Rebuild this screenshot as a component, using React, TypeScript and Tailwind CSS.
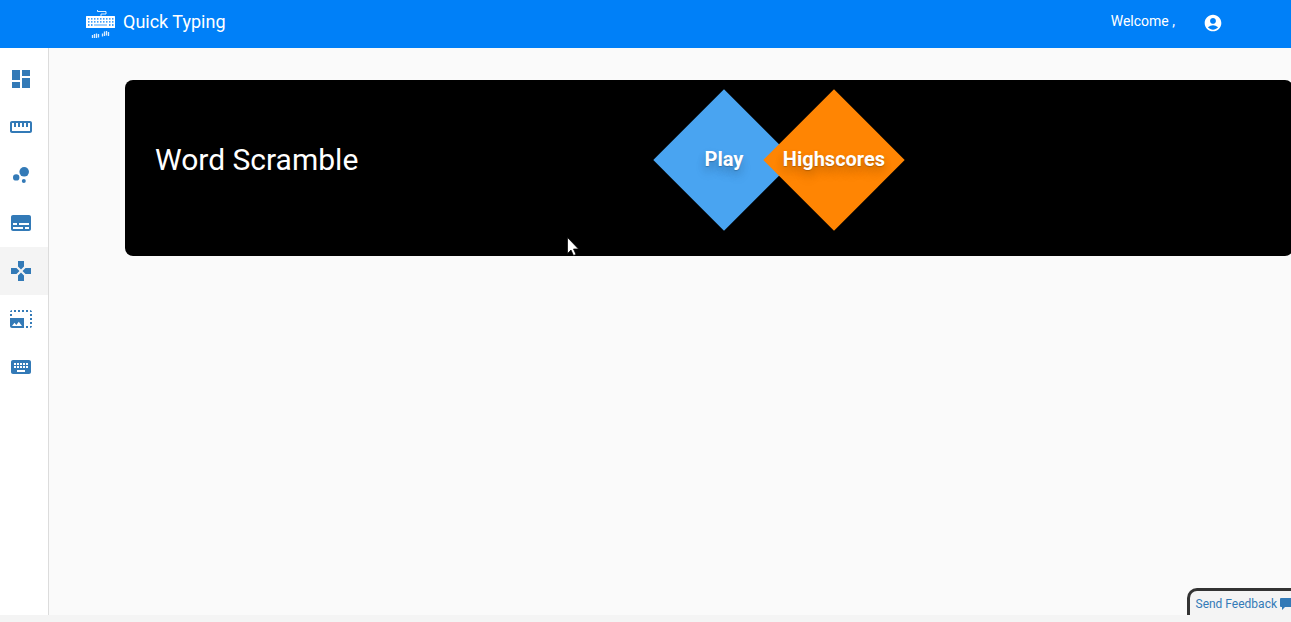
import {
  MdAccountCircle,
  MdBubbleChart,
  MdDashboard,
  MdGames,
  MdKeyboard,
  MdPhotoSizeSelectLarge,
  MdStraighten,
  MdSubtitles,
} from "react-icons/md";

const links = [
  { label: "Dashboard", href: "#dashboard", Icon: MdDashboard },
  { label: "Lessons", href: "#lessons", Icon: MdStraighten },
  { label: "Progress", href: "#progress", Icon: MdBubbleChart },
  { label: "Texts", href: "#texts", Icon: MdSubtitles },
  { label: "Games", href: "#games", Icon: MdGames, active: true },
  { label: "Pictures", href: "#pictures", Icon: MdPhotoSizeSelectLarge },
  { label: "Keyboard", href: "#keyboard", Icon: MdKeyboard },
];

const keyColumns = [3, 6, 9, 12, 15, 18, 21, 24, 27];
const keyRows = [9, 12];

function Logo() {
  return (
    <svg viewBox="0 0 30 30" className="size-[30px]" fill="none" aria-hidden="true">
      <path d="M12.500 1v1.500h8.500v2.500h-5v3" stroke="white" strokeWidth="1" opacity=".85" />
      <rect x="1" y="7" width="29" height="12" rx=".5" fill="white" />
      <g fill="#0080f8" opacity=".75">
        {keyRows.map((y) =>
          keyColumns.map((x) => <rect key={`${x}-${y}`} x={x} y={y} width="1.500" height="1.700" />),
        )}
        <path d="M3 15h1.500v2H3zM6 15h1.500v2H6zM9 15.500h13v1H9zM24 15h1.500v2H24zM27 15h1.500v2H27z" />
      </g>
      <path
        d="M7.500 26v3M9.500 25v4M11.500 24.500v4.500M13.500 25v3.500M17.500 24.500v3M19.500 22.500v4.500M21.500 22v4.500M23.500 23v4"
        stroke="white"
        strokeWidth="1.300"
        opacity=".85"
      />
    </svg>
  );
}

function FeedbackBubble() {
  return (
    <svg viewBox="0 0 14 12" className="h-3 w-3.5" fill="currentColor" aria-hidden="true">
      <path d="M1 0h12a1 1 0 0 1 1 1v7a1 1 0 0 1-1 1H5l-3 3V9H1a1 1 0 0 1-1-1V1a1 1 0 0 1 1-1z" />
    </svg>
  );
}

function Diamond({ label, color }: { label: string; color: string }) {
  return (
    <button
      type="button"
      className="grid size-[100px] cursor-pointer grid-cols-[100px] grid-rows-[100px] place-items-center"
    >
      <span className={`col-start-1 row-start-1 size-[100px] rotate-45 ${color}`} />
      <span className="relative col-start-1 row-start-1 pb-0.5 text-xl leading-6 font-bold text-white [text-shadow:0_1px_1px_rgba(0,0,0,0.2),0_4px_8px_rgba(0,0,0,0.15),0_8px_12px_rgba(0,0,0,0.12)]">
        {label}
      </span>
    </button>
  );
}

export default function App() {
  return (
    <div className="flex min-h-screen flex-col overflow-hidden bg-[#f4f4f4] font-[Roboto,sans-serif]">
      <header className="flex h-12 items-center justify-between bg-[#0080f8] pr-[68px] pl-[85px] text-white">
        <a href="#home" className="flex items-center gap-2 text-lg">
          <Logo />
          <span className="pb-1">Quick Typing</span>
        </a>
        <div className="flex items-center gap-7 pb-0.5">
          <span className="pb-1 text-sm">Welcome ,</span>
          <button type="button" aria-label="Account" className="cursor-pointer">
            <MdAccountCircle className="size-5" />
          </button>
        </div>
      </header>
      <div className="mb-[7px] flex grow bg-[#fafafa]">
        <nav className="w-[49px] shrink-0 border-r border-[#dcdcdc] bg-white pt-[7px]">
          {links.map(({ label, href, Icon, active }) => (
            <a
              key={label}
              href={href}
              aria-label={label}
              className={`flex h-12 items-center pl-[9px] text-[#337ab7] ${active ? "bg-[#f4f4f4]" : ""}`}
            >
              <Icon className="size-6" />
            </a>
          ))}
        </nav>
        <div className="flex min-w-0 grow flex-col justify-between pt-8 pl-[76px]">
          <main className="-mr-0.5 flex h-44 items-center rounded-lg bg-black pb-4">
            <h1 className="w-[47%] pl-[30px] text-3xl text-white">Word Scramble</h1>
            <div className="flex gap-2.5">
              <Diamond label="Play" color="bg-[#49a4f1]" />
              <Diamond label="Highscores" color="bg-[#ff8503]" />
            </div>
          </main>
          <a
            href="#feedback"
            className="-mr-1 flex h-[27px] items-center gap-[3px] self-end rounded-tl-[10px] border-t-3 border-l-3 border-[#333] bg-[#f4f4f4] pt-0.5 pr-px pl-1.5 text-xs text-[#337ab7]"
          >
            Send Feedback
            <FeedbackBubble />
          </a>
        </div>
      </div>
      <svg
        viewBox="0 0 12 19"
        className="pointer-events-none absolute top-[237px] left-[567px] h-[19px] w-3"
        aria-hidden="true"
      >
        <path d="M.5 .5v16l3.500-3.500 2.500 5.500 2.500-1-2.500-5.500h5z" fill="white" stroke="black" strokeWidth=".7" />
      </svg>
    </div>
  );
}
